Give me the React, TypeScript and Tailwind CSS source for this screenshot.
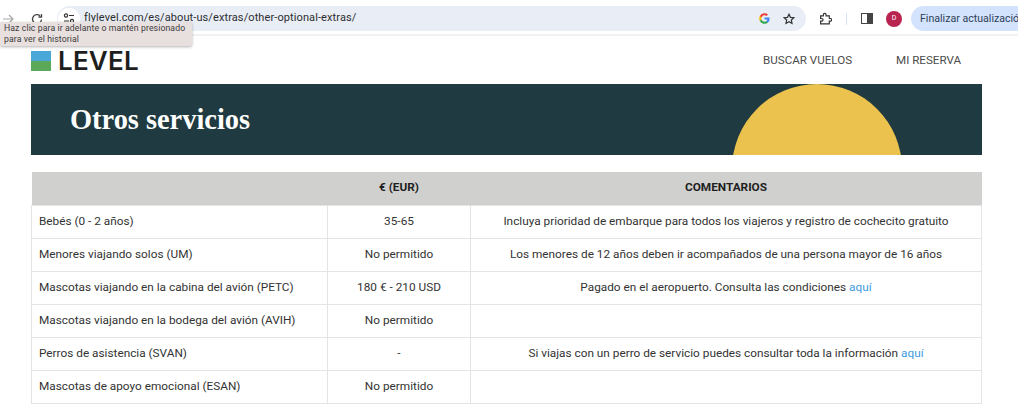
const rows = [
  { name: "Bebés (0 - 2 años)", price: "35-65", note: "Incluya prioridad de embarque para todos los viajeros y registro de cochecito gratuito" },
  { name: "Menores viajando solos (UM)", price: "No permitido", note: "Los menores de 12 años deben ir acompañados de una persona mayor de 16 años" },
  { name: "Mascotas viajando en la cabina del avión (PETC)", price: "180 € - 210 USD", note: "Pagado en el aeropuerto. Consulta las condiciones ", link: true },
  { name: "Mascotas viajando en la bodega del avión (AVIH)", price: "No permitido", note: "" },
  { name: "Perros de asistencia (SVAN)", price: "-", note: "Si viajas con un perro de servicio puedes consultar toda la información ", link: true },
  { name: "Mascotas de apoyo emocional (ESAN)", price: "No permitido", note: "" },
]

const BrowserBar = () => (
  <div className="relative flex h-[36px] w-[1018px] items-center border-b-2 border-[#f1f1f1] bg-white pt-[3px] font-['Roboto',sans-serif]">
    <svg width="12" height="12" viewBox="0 0 12 12" fill="none" stroke="#a8a8a8" strokeWidth="1.2" className="ml-[2px] mr-[17px]">
      <path d="M1 6h10M7 2l4 4-4 4" />
    </svg>
    <svg width="12" height="12" viewBox="0 0 12 12" fill="none" stroke="#444" strokeWidth="1.3" className="mr-[14px]">
      <path d="M10.500 6.500a4.500 4.500 0 1 1-1.400-3.600M10.500 1v3h-3" />
    </svg>
    <div className="flex h-[25px] w-[749px] items-center rounded-full bg-[#e9edf6] pr-[11px]">
      <div className="ml-[1px] flex h-[22px] w-[22px] items-center justify-center rounded-full bg-white">
        <svg width="12" height="11" viewBox="0 0 12 11" fill="none" stroke="#333" strokeWidth="1.2">
          <circle cx="3" cy="2.500" r="1.600" />
          <path d="M6 2.500h5M1 8h5" />
          <circle cx="9" cy="8" r="1.600" />
        </svg>
      </div>
      <span className="ml-[4px] text-[11px] tracking-[0.1px] text-[#2c2d30]">flylevel.com/es/about-us/extras/other-optional-extras/</span>
      <svg width="11" height="11" viewBox="0 0 24 24" className="ml-auto">
        <path fill="#4285F4" d="M23 12.300c0-.8-.1-1.600-.2-2.300H12v4.400h6.200a5.300 5.300 0 0 1-2.300 3.500v2.900h3.700c2.200-2 3.400-5 3.400-8.500z" />
        <path fill="#34A853" d="M12 23.500c3.100 0 5.700-1 7.600-2.800l-3.700-2.900c-1 .7-2.300 1.100-3.900 1.100-3 0-5.500-2-6.400-4.700H1.800v3A11.500 11.500 0 0 0 12 23.500z" />
        <path fill="#FBBC05" d="M5.600 14.200a6.900 6.900 0 0 1 0-4.400v-3H1.800a11.500 11.500 0 0 0 0 10.400l3.800-3z" />
        <path fill="#EA4335" d="M12 5.100c1.700 0 3.200.6 4.400 1.700l3.300-3.300A11.500 11.500 0 0 0 1.800 6.800l3.800 3C6.500 7.100 9 5.100 12 5.100z" />
      </svg>
      <svg width="12" height="12" viewBox="0 0 24 24" fill="none" stroke="#333" strokeWidth="2.400" className="ml-[13px]">
        <path d="M12 2.500l2.900 6.200 6.800.8-5 4.600 1.300 6.700-6-3.400-6 3.400 1.300-6.700-5-4.600 6.800-.8z" />
      </svg>
    </div>
    <svg width="13" height="13" viewBox="0 0 24 24" fill="none" stroke="#333" strokeWidth="2.200" className="ml-[13px]">
      <path d="M3 7h5V5a2.500 2.500 0 0 1 5 0v2h6v5h2a2.500 2.500 0 0 1 0 5h-2v5H3v-5h2a2.500 2.500 0 0 0 0-5H3z" />
    </svg>
    <div className="ml-[14px] h-[12px] w-px bg-[#d3e3fd]" />
    <div className="ml-[14px] flex h-[11px] w-[12px] border border-[#444]">
      <div className="ml-auto w-[5px] bg-[#444]" />
    </div>
    <div className="ml-[13px] flex h-[16px] w-[16px] items-center justify-center rounded-full bg-[#b9234f] text-[7px] text-white">D</div>
    <div className="ml-[9px] flex h-[25px] flex-1 items-center overflow-hidden whitespace-nowrap rounded-l-full bg-[#d3e3fd] pl-[9px] text-[10.6px] text-[#2f3f57]">Finalizar actualización</div>
    <div className="absolute left-0 top-[22px] z-10 h-[24px] w-[192px] rounded-[2px] bg-[#e8e0df] pl-[4px] pt-[1px] text-[8.7px] leading-[11px] tracking-[0.1px] text-[#3c3c3c] shadow-[0_1px_3px_rgba(0,0,0,0.3)]">
      Haz clic para ir adelante o mantén presionado
      <br />
      para ver el historial
    </div>
  </div>
)

export default function App() {
  return (
    <div className="h-[415px] w-[1024px] overflow-hidden bg-white">
      <BrowserBar />
      <div className="ml-[31px] w-[951px] font-['Roboto',sans-serif]">
        <div className="flex h-[48px] items-center justify-between">
          <div className="flex items-center pt-[2px]">
            <div className="flex h-[20px] w-[20px] flex-col">
              <div className="h-[10px] bg-[#4aa8d8]" />
              <div className="h-[10px] bg-[#5ba85a]" />
            </div>
            <span className="ml-[7px] font-['Inter',sans-serif] text-[26px] leading-none font-semibold tracking-[0.2px] text-[#1e1e1e]">LEVEL</span>
          </div>
          <nav className="mr-[21px] flex gap-[44px] pt-[2px] text-[11.6px] text-[#4c4c4c]">
            <span>BUSCAR VUELOS</span>
            <span>MI RESERVA</span>
          </nav>
        </div>

        <div className="relative flex h-[71px] items-center overflow-hidden bg-[#1f3a40] pl-[39px] pt-[2px]">
          <h1 className="font-['Liberation_Serif',serif] text-[28.400px] font-bold text-white">Otros servicios</h1>
          <div className="absolute left-[701px] top-0 h-[170px] w-[170px] rounded-full bg-[#eac24d]" />
        </div>

        <table className="mt-[17px] w-[951px] table-fixed border-collapse text-[11.800px] text-[#333]">
          <colgroup>
            <col className="w-[296px]" />
            <col className="w-[143px]" />
            <col />
          </colgroup>
          <thead>
            <tr className="h-[33px] bg-[#d0d0ce] text-[11.800px] font-bold text-[#1f1f1f]">
              <th />
              <th>€ (EUR)</th>
              <th>COMENTARIOS</th>
            </tr>
          </thead>
          <tbody>
            {rows.map((row) => (
              <tr key={row.name} className="h-[33px]">
                <td className="border border-[#e4e4e4] pl-[7px]">{row.name}</td>
                <td className="border border-[#e4e4e4] text-center">{row.price}</td>
                <td className="border border-[#e4e4e4] text-center">
                  {row.note}
                  {row.link ? <a className="text-[#3d9be0]">aquí</a> : null}
                </td>
              </tr>
            ))}
          </tbody>
        </table>
      </div>
    </div>
  )
}
